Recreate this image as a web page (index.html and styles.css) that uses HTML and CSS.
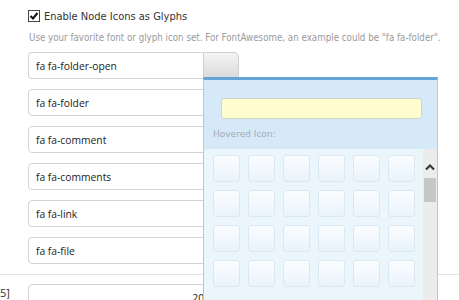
FILE: index.html
```html
<!DOCTYPE html>
<html lang="en">
<head>
    <meta charset="UTF-8">
    <title>Node Icons</title>
    <link rel="stylesheet" href="styles.css">
</head>
<body>
    <div id="options">
        <label class="check-row">
            <span class="checkbox">
                <svg width="12" height="12" viewBox="0 0 12 12">
                    <rect x="0.5" y="0.5" width="11" height="11" fill="#fff" stroke="#444"/>
                    <path d="M2.5 6 L5 8.5 L9.5 3" fill="none" stroke="#111" stroke-width="2"/>
                </svg>
            </span>
            Enable Node Icons as Glyphs
        </label>
        <p class="hint">Use your favorite font or glyph icon set. For FontAwesome, an example could be "fa fa-folder".</p>

        <div class="icon-fields">
            <div class="field">
                <input class="text-input with-button" type="text" value="fa fa-folder-open">
                <button class="picker-button"></button>
            </div>
            <div class="field"><input class="text-input" type="text" value="fa fa-folder"></div>
            <div class="field"><input class="text-input" type="text" value="fa fa-comment"></div>
            <div class="field"><input class="text-input" type="text" value="fa fa-comments"></div>
            <div class="field"><input class="text-input" type="text" value="fa fa-link"></div>
            <div class="field"><input class="text-input" type="text" value="fa fa-file"></div>
        </div>
    </div>

    <div class="size-row">
        <span class="size-label">5]</span>
        <input class="text-input number-input" type="text" value="200">
    </div>

    <!-- icon picker dropdown -->
    <div id="picker">
        <div class="picker-head">
            <input class="search-input" type="text">
            <div class="hovered">Hovered Icon:</div>
        </div>
        <div class="picker-body">
            <div class="icon-grid" id="icon-grid"></div>
            <div class="scrollbar">
                <svg class="scroll-up" width="12" height="8" viewBox="0 0 12 8">
                    <path d="M2 6.5 L6 2.5 L10 6.5" fill="none" stroke="#333" stroke-width="2"/>
                </svg>
                <div class="scroll-thumb"></div>
            </div>
        </div>
    </div>

    <script>
        // tiles for the glyph grid
        const grid = document.getElementById('icon-grid');
        for (let i = 0; i < 24; i++) {
            const tile = document.createElement('div');
            tile.className = 'icon-tile';
            grid.appendChild(tile);
        }
    </script>
</body>
</html>
```

FILE: styles.css
```css
body {
    margin: 0;
    padding: 0;
    background-color: #fff;
    font-family: 'Open Sans', sans-serif;
    color: #333;
    overflow: hidden;
}

#options {
    padding: 8px 0 0 28px;
}

.check-row {
    display: flex;
    align-items: center;
    gap: 4px;
    height: 16px;
    font-family: 'DejaVu Sans Condensed', 'DejaVu Sans', sans-serif;
    font-size: 11px;
    color: #333;
}

.checkbox {
    display: flex;
    width: 12px;
    height: 12px;
}

.hint {
    margin: 8px 0 0 1px;
    font-family: 'DejaVu Sans Condensed', 'DejaVu Sans', sans-serif;
    font-size: 9.7px;
    color: #9a9a9a;
    white-space: nowrap;
}

.icon-fields {
    display: flex;
    flex-direction: column;
    gap: 10px;
    margin-top: 9px;
}

.field {
    display: flex;
}

.text-input {
    box-sizing: border-box;
    width: 211px;
    height: 27px;
    padding: 0 7px;
    border: 1px solid #d4d4d4;
    border-radius: 4px;
    font-family: 'Open Sans', sans-serif;
    font-size: 10.3px;
    color: #222;
    background-color: #fff;
    outline: none;
}

.with-button {
    width: 175px;
    border-right: none;
    border-radius: 4px 0 0 4px;
}

.picker-button {
    width: 36px;
    height: 27px;
    border: 1px solid #cfcfcf;
    border-radius: 0 5px 0 0;
    background: linear-gradient(#f4f4f4, #dadada);
    padding: 0;
}

.size-row {
    display: flex;
    align-items: flex-start;
    margin-top: 10px;
    padding-top: 9px;
    border-top: 1px solid #e2e2e2;
}

.size-label {
    width: 28px;
    padding-top: 2px;
    font-size: 11px;
    line-height: 14px;
    color: #333;
}

.number-input {
    width: 190px;
    text-align: right;
}

#picker {
    position: absolute;
    left: 203px;
    top: 77px;
    width: 235px;
    height: 223px;
    box-sizing: border-box;
    overflow: hidden;
    border-top: 3px solid #63a4da;
    border-left: 1px solid #a8cdeb;
    border-right: 1px solid #a8cdeb;
    background-color: #d5e9f9;
}

.picker-head {
    padding: 18px 0 0 17px;
    height: 51px;
}

.search-input {
    box-sizing: border-box;
    display: block;
    width: 201px;
    height: 21px;
    border: 1px solid #cfd6c8;
    border-radius: 3px;
    background-color: #fffdd0;
    outline: none;
}

.hovered {
    margin: 10px 0 0 -8px;
    font-family: 'DejaVu Sans', sans-serif;
    font-size: 9px;
    color: #a3acb4;
}

.picker-body {
    display: flex;
    justify-content: space-between;
    background-color: #ebf5fc;
    height: 169px;
}

.icon-grid {
    display: grid;
    grid-template-columns: repeat(6, 27px);
    grid-auto-rows: 27px;
    gap: 8px;
    padding: 6px 0 0 9px;
    align-content: start;
}

.icon-tile {
    box-sizing: border-box;
    border: 1px solid #dbe8f2;
    border-radius: 3px;
    background: linear-gradient(#fbfdff, #e9f3fb);
}

.scrollbar {
    width: 14px;
    background-color: #ececec;
    display: flex;
    flex-direction: column;
    align-items: center;
}

.scroll-up {
    margin-top: 14px;
}

.scroll-thumb {
    width: 12px;
    height: 24px;
    margin-top: 7px;
    background-color: #c6c6c6;
}
```
